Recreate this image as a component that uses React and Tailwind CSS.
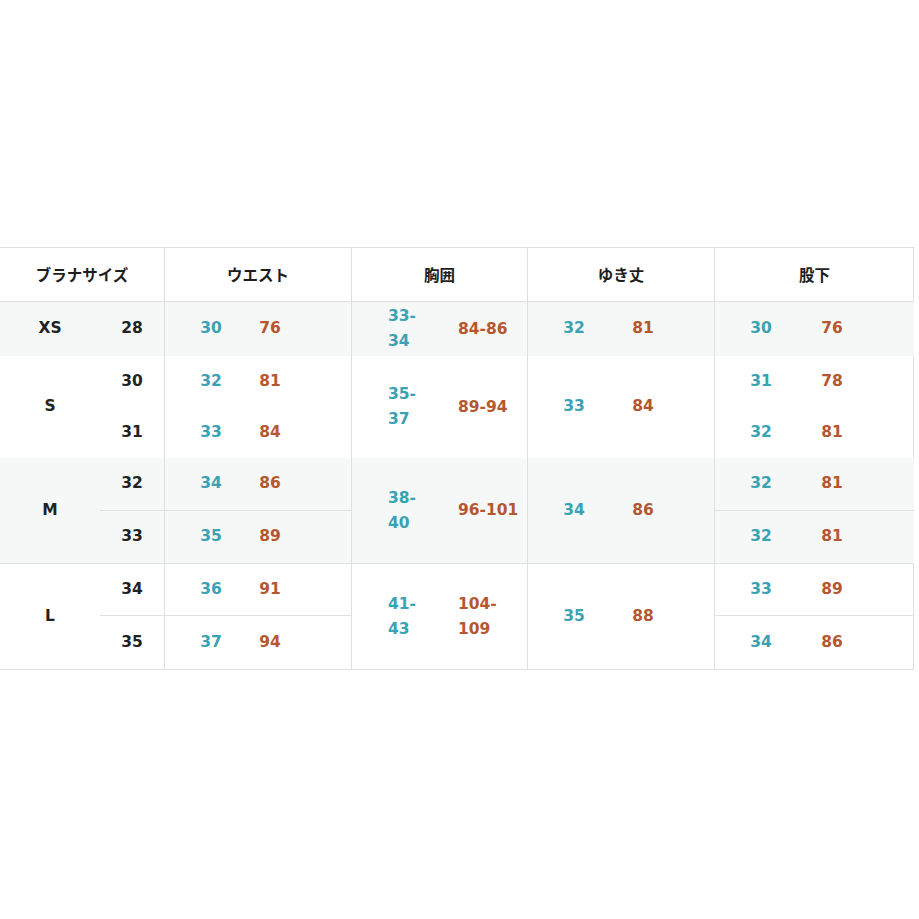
import React from 'react';

const line = 'border-[#dfe1e1]';
const shade = 'bg-[#f5f8f7]';
const jp = { fontFamily: '"Noto Sans CJK JP", sans-serif' };

// two numbers in a cell: first centred at 46px, second centred further right
const Pair = ({ a, b, w, className = '' }) => (
  <div className={`flex items-center ${className}`}>
    <span className="w-[92px] text-center text-[#3aa2b2]">{a}</span>
    <span className={`${w} text-center text-[#b5572f]`}>{b}</span>
  </div>
);

const Chest = ({ a, b, className = '' }) => (
  <div className={`flex items-center pl-[36px] ${className}`}>
    <span className="w-[70px] text-[#3aa2b2] leading-[25px]">{a}</span>
    <span className="text-[#b5572f] leading-[25px]">{b}</span>
  </div>
);

export default function App() {
  const cell = 'flex items-center justify-center';
  const head = `${cell} border-b ${line} text-[15.5px] font-bold text-[#1e1e1e]`;
  return (
    <div className="min-h-[919px] bg-white pt-[247px]" style={{ fontFamily: '"DejaVu Sans", "Noto Sans CJK JP", sans-serif' }}>
      <div className={`grid w-[914px] grid-cols-[100px_65px_187px_176px_187px_199px] grid-rows-[54px_54px_51px_51px_53px_53px_52px_53px] border-t border-b border-r ${line} text-[15.5px] font-bold text-[#222]`}>
        {/* header */}
        <div className={`col-span-2 border-r ${head}`} style={jp}>ブラナサイズ</div>
        <div className={`border-r ${head}`} style={jp}>ウエスト</div>
        <div className={`border-r ${head}`} style={jp}>胸囲</div>
        <div className={`border-r ${head}`} style={jp}>ゆき丈</div>
        <div className={head} style={jp}>股下</div>

        {/* XS */}
        <div className={`${cell} ${shade}`}>XS</div>
        <div className={`${cell} ${shade} border-r ${line}`}>28</div>
        <Pair a="30" b="76" w="w-[26px]" className={`${shade} border-r ${line}`} />
        <Chest a={<>33-<br />34</>} b="84-86" className={`${shade} border-r ${line}`} />
        <Pair a="32" b="81" w="w-[46px]" className={`${shade} border-r ${line}`} />
        <Pair a="30" b="76" w="w-[50px]" className={shade} />

        {/* S */}
        <div className={`row-span-2 ${cell}`}>S</div>
        <div className={`${cell} border-r ${line}`}>30</div>
        <Pair a="32" b="81" w="w-[26px]" className={`border-r ${line}`} />
        <Chest a={<>35-<br />37</>} b="89-94" className={`row-span-2 border-r ${line}`} />
        <Pair a="33" b="84" w="w-[46px]" className={`row-span-2 border-r ${line}`} />
        <Pair a="31" b="78" w="w-[50px]" />
        <div className={`${cell} border-r ${line}`}>31</div>
        <Pair a="33" b="84" w="w-[26px]" className={`border-r ${line}`} />
        <Pair a="32" b="81" w="w-[50px]" />

        {/* M */}
        <div className={`row-span-2 ${cell} ${shade} border-b ${line}`}>M</div>
        <div className={`${cell} ${shade} border-r border-b ${line}`}>32</div>
        <Pair a="34" b="86" w="w-[26px]" className={`${shade} border-r border-b ${line}`} />
        <Chest a={<>38-<br />40</>} b="96-101" className={`row-span-2 ${shade} border-r border-b ${line}`} />
        <Pair a="34" b="86" w="w-[46px]" className={`row-span-2 ${shade} border-r border-b ${line}`} />
        <Pair a="32" b="81" w="w-[50px]" className={`${shade} border-b ${line}`} />
        <div className={`${cell} ${shade} border-r border-b ${line}`}>33</div>
        <Pair a="35" b="89" w="w-[26px]" className={`${shade} border-r border-b ${line}`} />
        <Pair a="32" b="81" w="w-[50px]" className={`${shade} border-b ${line}`} />

        {/* L */}
        <div className={`row-span-2 ${cell}`}>L</div>
        <div className={`${cell} border-r border-b ${line}`}>34</div>
        <Pair a="36" b="91" w="w-[26px]" className={`border-r border-b ${line}`} />
        <Chest a={<>41-<br />43</>} b={<>104-<br />109</>} className={`row-span-2 border-r ${line}`} />
        <Pair a="35" b="88" w="w-[46px]" className={`row-span-2 border-r ${line}`} />
        <Pair a="33" b="89" w="w-[50px]" className={`border-b ${line}`} />
        <div className={`${cell} border-r ${line}`}>35</div>
        <Pair a="37" b="94" w="w-[26px]" className={`border-r ${line}`} />
        <Pair a="34" b="86" w="w-[50px]" />
      </div>
    </div>
  );
}
